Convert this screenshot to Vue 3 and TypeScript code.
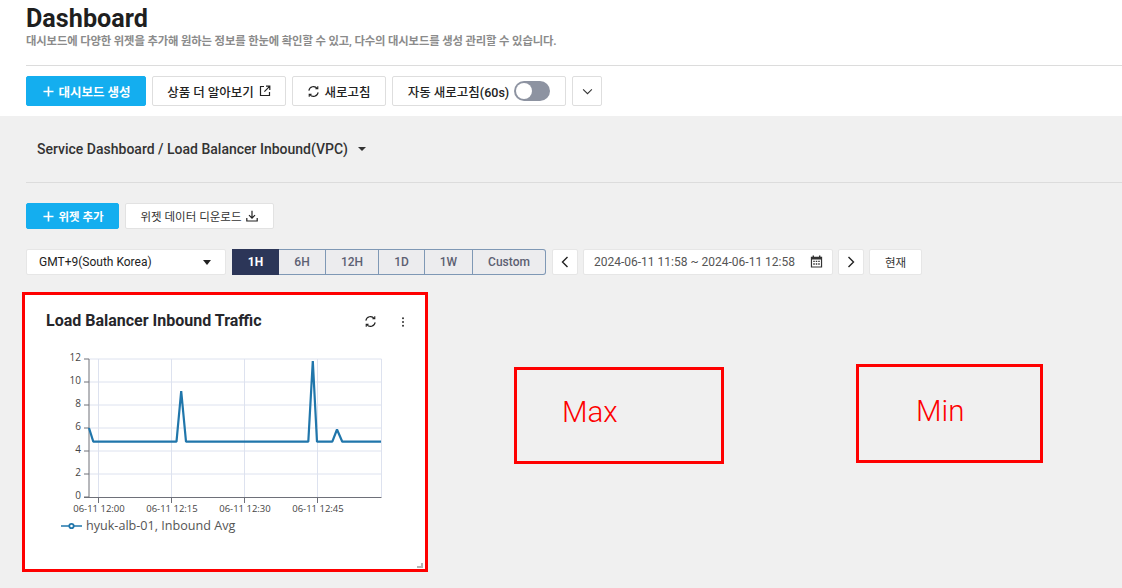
<script setup lang="ts">
const ranges: string[] = ['1H', '6H', '12H', '1D', '1W', 'Custom']
const yTicks = [12, 10, 8, 6, 4, 2, 0].map((v) => ({ v, y: 497 - v * 11.5 - 290 }))
const xTicks = [
  { x: 98.5, label: '06-11 12:00' },
  { x: 171.5, label: '06-11 12:15' },
  { x: 244.5, label: '06-11 12:30' },
  { x: 317.5, label: '06-11 12:45' },
]
const points = '89,138 93.3,151.7 176.5,151.7 181.2,101 186,151.7 308.3,151.7 312.8,71 317,151.7 332.3,151.7 337,139.5 342.3,151.7 381,151.7'
</script>

<template>
  <div class="page">
    <header class="head">
      <h1 class="title">Dashboard</h1>
      <p class="sub">대시보드에 다양한 위젯을 추가해 원하는 정보를 한눈에 확인할 수 있고, 다수의 대시보드를 생성 관리할 수 있습니다.</p>
      <div class="rule"></div>
      <div class="actions">
        <button class="btn primary w-create">
          <svg class="plus" viewBox="0 0 12 12"><path d="M6 .5v11M.5 6h11" /></svg>대시보드 생성
        </button>
        <button class="btn w-learn">
          상품 더 알아보기
          <svg class="ico" viewBox="0 0 12 12"><path d="M5 1.5H1.5v9h9V7M7 1.2h3.8V5M10.6 1.4 5.4 6.6" /></svg>
        </button>
        <button class="btn w-refresh">
          <svg class="ico sync" viewBox="0 0 14 14"><path d="M2 6a5 5 0 0 1 9-2.2M12 8a5 5 0 0 1-9 2.2M11.6 1.4v2.6H9M2.4 12.6V10H5" /></svg>새로고침
        </button>
        <div class="btn w-auto">
          자동 새로고침(60s)
          <span class="toggle"><span class="knob"></span></span>
        </div>
        <button class="btn w-more">
          <svg class="chev" viewBox="0 0 12 8"><path d="M1 1.5 6 6.5l5-5" /></svg>
        </button>
      </div>
    </header>

    <main class="body">
      <div class="crumb">
        <span>Service Dashboard / Load Balancer Inbound(VPC)</span>
        <span class="caret"></span>
      </div>
      <div class="rule"></div>

      <div class="tools">
        <button class="btn2 primary w-add">
          <svg class="plus" viewBox="0 0 12 12"><path d="M6 .5v11M.5 6h11" /></svg>위젯 추가
        </button>
        <button class="btn2 w-down">
          위젯 데이터 디운로드
          <svg class="ico" viewBox="0 0 12 12"><path d="M6 .8v7.2M3 5.2 6 8.2l3-3M.8 8v3h10.4V8" /></svg>
        </button>
      </div>

      <div class="filters">
        <div class="tz">
          <span>GMT+9(South Korea)</span>
          <span class="caret dark"></span>
        </div>
        <div class="seg">
          <button v-for="(r, i) in ranges" :key="r" class="seg-item" :class="['s' + i, { on: i === 0 }]">{{ r }}</button>
        </div>
        <button class="mini prev">
          <svg class="arrow" viewBox="0 0 8 12"><path d="M6.5 1 1.5 6l5 5" /></svg>
        </button>
        <div class="date">
          <span>2024-06-11 11:58 ~ 2024-06-11 12:58</span>
          <svg class="cal" viewBox="0 0 12 12"><path fill-rule="evenodd" d="M.8 1.6h1.6V.4h1.3v1.2h4.6V.4h1.3v1.2h1.6v10H.8zM1.9 4.2v6.4h8.2V4.2zM3 5.2h1.4v1.3H3zM5.3 5.2h1.4v1.3H5.3zM7.6 5.2H9v1.3H7.6zM3 7.7h1.4V9H3zM5.3 7.7h1.4V9H5.3zM7.6 7.7H9V9H7.6z" /></svg>
        </div>
        <button class="mini next">
          <svg class="arrow" viewBox="0 0 8 12"><path d="M1.5 1l5 5-5 5" /></svg>
        </button>
        <button class="now">현재</button>
      </div>

      <section class="widget">
        <div class="w-head">
          <h2 class="w-title">Load Balancer Inbound Traffic</h2>
          <svg class="w-refresh-ico" viewBox="0 0 14 14"><path d="M2 6a5 5 0 0 1 9-2.2M12 8a5 5 0 0 1-9 2.2M11.6 1.4v2.6H9M2.4 12.6V10H5" /></svg>
          <svg class="kebab" viewBox="0 0 4 12"><circle cx="2" cy="1.6" r="1.2" /><circle cx="2" cy="6" r="1.2" /><circle cx="2" cy="10.4" r="1.2" /></svg>
        </div>
      </section>
    </main>

    <svg class="chart" viewBox="0 290 428 280" width="428" height="280">
      <g transform="translate(0 290)">
        <g class="grid">
          <line v-for="t in yTicks.slice(0, 6)" :key="t.v" x1="89" x2="381.5" :y1="t.y" :y2="t.y" />
          <line v-for="t in xTicks" :key="t.x" :x1="t.x" :x2="t.x" y1="69" y2="207" />
          <line x1="381.5" x2="381.5" y1="69" y2="207" />
        </g>
        <g class="axis">
          <line x1="89" x2="89" y1="69" y2="207.5" />
          <line x1="84" x2="381.5" y1="207.5" y2="207.5" />
          <line v-for="t in yTicks" :key="'y' + t.v" x1="84" x2="89" :y1="t.y" :y2="t.y" />
          <line v-for="t in xTicks" :key="'x' + t.x" :x1="t.x" :x2="t.x" y1="207" y2="213" />
        </g>
        <text v-for="t in yTicks" :key="'l' + t.v" class="lbl" x="81" :y="t.y + 2" text-anchor="end">{{ t.v }}</text>
        <text v-for="t in xTicks" :key="'t' + t.x" class="lbl tick" :x="t.x + 0.5" y="222" text-anchor="middle">{{ t.label }}</text>
        <polyline class="series" :points="points" />
        <line class="leg" x1="61" x2="82" y1="236" y2="236" />
        <circle class="leg-dot" cx="71.5" cy="236" r="2.2" />
        <text class="leg-text" x="86" y="240">hyuk-alb-01, Inbound Avg</text>
        <path class="grip" d="M421 273h2v5h-6v-2h4z" />
      </g>
    </svg>

    <div class="note max"><span>Max</span></div>
    <div class="note min"><span>Min</span></div>
  </div>
</template>

<style>
html, body { margin: 0; overflow: hidden; background: #fff; }
</style>

<style scoped>
.page {
  position: relative;
  width: 1122px;
  height: 588px;
  overflow: hidden;
  font-family: Roboto, "Noto Sans CJK KR", sans-serif;
  color: #222;
}
button { font-family: inherit; cursor: pointer; }
svg { display: block; flex: none; }

.head { height: 116px; padding-left: 26px; box-sizing: border-box; background: #fff; }
.title { margin: 0; padding-top: 5px; font-size: 25.2px; line-height: 28px; font-weight: 700; color: #1f1f1f; }
.sub { margin: 0; font-size: 11.34px; line-height: 16px; font-weight: 700; color: #8b8b8b; letter-spacing: -0.12px; }
.rule { height: 1px; background: #dcdcdc; }
.head .rule { margin-top: 16px; }
.actions { display: flex; gap: 6px; margin-top: 10px; }
.btn {
  display: flex; align-items: center; justify-content: center; gap: 5px;
  height: 30px; box-sizing: border-box; padding: 0;
  border: 1px solid #dedede; border-radius: 2px; background: #fff;
  font-size: 12.5px; font-weight: 500; color: #222;
}
.primary { background: #14aeef; border-color: #14aeef; color: #fff; font-weight: 700; }
.w-create { width: 120px; gap: 4px; padding-left: 2px; }
.w-learn { width: 134px; }
.w-refresh { width: 94px; gap: 4px; }
.w-auto { width: 174px; gap: 5px; }
.w-more { width: 30px; }
.plus { width: 11px; height: 11px; }
.plus path { stroke: #fff; stroke-width: 1.8; fill: none; }
.ico { width: 12px; height: 12px; }
.ico path { stroke: #222; stroke-width: 1.2; fill: none; }
.ico.sync { width: 13px; height: 13px; }
.chev { width: 11px; height: 7px; }
.chev path { stroke: #333; stroke-width: 1.2; fill: none; }
.toggle { display: block; width: 36px; height: 20px; border-radius: 10px; background: #8d93a1; box-sizing: border-box; padding: 2px; }
.knob { display: block; width: 16px; height: 16px; border-radius: 50%; background: #fff; }

.body { height: 472px; background: #f0f0f0; padding-left: 26px; box-sizing: border-box; }
.crumb { display: flex; align-items: center; gap: 10px; height: 66px; padding-left: 11px; font-size: 14px; font-weight: 500; color: #333; }
.caret { width: 0; height: 0; border: 4px solid transparent; border-top: 4px solid #333; border-bottom: 0; }
.caret.dark { border-top-color: #222; border-width: 5px 4px 0; }

.tools { display: flex; gap: 6px; margin-top: 20px; }
.btn2 {
  display: flex; align-items: center; justify-content: center; gap: 5px;
  height: 26px; box-sizing: border-box; padding: 0;
  border: 1px solid #e2e2e2; border-radius: 2px; background: #fff;
  font-size: 11.5px; color: #333;
}
.btn2.primary { border-color: #14aeef; background: #14aeef; color: #fff; font-weight: 700; gap: 4px; padding-left: 2px; }
.w-add { width: 93px; }
.w-down { width: 149px; }

.filters { display: flex; margin-top: 20px; height: 26px; }
.tz {
  display: flex; align-items: center; justify-content: space-between;
  width: 200px; box-sizing: border-box; padding: 0 14px 0 12px;
  background: #fff; border: 1px solid #e6e6e6; border-radius: 2px;
  font-size: 12px; color: #222;
}
.seg { display: flex; margin-left: 6px; width: 314px; border: 1px solid #7f98b5; border-left: 0; border-radius: 0 3px 3px 0; box-sizing: border-box; background: #ececee; }
.seg-item { box-sizing: content-box; padding: 0; border: 0; border-right: 1px solid #7f98b5; background: transparent; font-size: 12px; font-weight: 500; color: #5c6072; }
.seg-item:last-child { border-right: 0; }
.seg-item.on { background: #2c3658; color: #fff; font-weight: 700; margin: -1px 0; border-right: 0; }
.s0 { width: 47px; }
.s1 { width: 46px; }
.s2 { width: 52px; }
.s3 { width: 45px; }
.s4 { width: 47px; }
.s5 { flex: 1; }
.mini { display: flex; align-items: center; justify-content: center; width: 26px; padding: 0; background: #fff; border: 1px solid #e6e6e6; border-radius: 2px; box-sizing: border-box; }
.prev { margin-left: 6px; }
.next { margin-left: 5px; }
.arrow { width: 8px; height: 12px; }
.arrow path { stroke: #222; stroke-width: 1.4; fill: none; }
.date {
  display: flex; align-items: center; justify-content: space-between;
  width: 250px; margin-left: 5px; box-sizing: border-box; padding: 0 9px 0 10px;
  background: #fff; border: 1px solid #e6e6e6; border-radius: 2px;
  font-size: 12px; color: #555;
}
.cal { width: 13px; height: 13px; margin-top: -2px; }
.cal path { fill: #333; }
.now { width: 53px; margin-left: 5px; padding: 0; background: #fff; border: 1px solid #e6e6e6; border-radius: 2px; font-size: 11.5px; color: #333; }

.widget {
  width: 406px; height: 280px; margin: 17px 0 0 -4px;
  box-sizing: border-box; border: 3px solid #fe0000; background: #fff;
}
.w-head { display: flex; align-items: center; height: 50px; padding: 0 20px 0 21px; }
.w-title { flex: 1; margin: 0; font-size: 16px; font-weight: 700; color: #26262b; }
.w-refresh-ico { width: 13px; height: 13px; margin-top: 3px; }
.w-refresh-ico path { stroke: #222; stroke-width: 1.2; fill: none; }
.kebab { width: 4px; height: 10px; margin: 3px 0 0 24px; fill: #333; }

.chart { position: absolute; left: 0; top: 290px; }
.grid line { stroke: #dde2ef; stroke-width: 1; }
.axis line { stroke: #6e7079; stroke-width: 1; }
.lbl { font: 10px "Open Sans", "Liberation Sans", sans-serif; fill: #444; }
.lbl.tick { font-size: 9.5px; }
.series { fill: none; stroke: #2076ab; stroke-width: 2.2; stroke-linejoin: bevel; }
.leg { stroke: #2076ab; stroke-width: 1.5; }
.leg-dot { fill: #fff; stroke: #2076ab; stroke-width: 1.8; }
.leg-text { font: 12.6px "Open Sans", "Liberation Sans", sans-serif; fill: #555; }
.grip { fill: #b5b5b5; }

.note { position: absolute; box-sizing: border-box; border: 3px solid #fe0000; color: #fe0000; font: 300 29.5px Roboto, "Liberation Sans", sans-serif; }
.note span { position: absolute; line-height: 34px; }
.max { left: 514px; top: 367px; width: 210px; height: 97px; }
.max span { left: 45px; top: 25px; }
.min { left: 856px; top: 364px; width: 187px; height: 99px; }
.min span { left: 57px; top: 27px; }
</style>
